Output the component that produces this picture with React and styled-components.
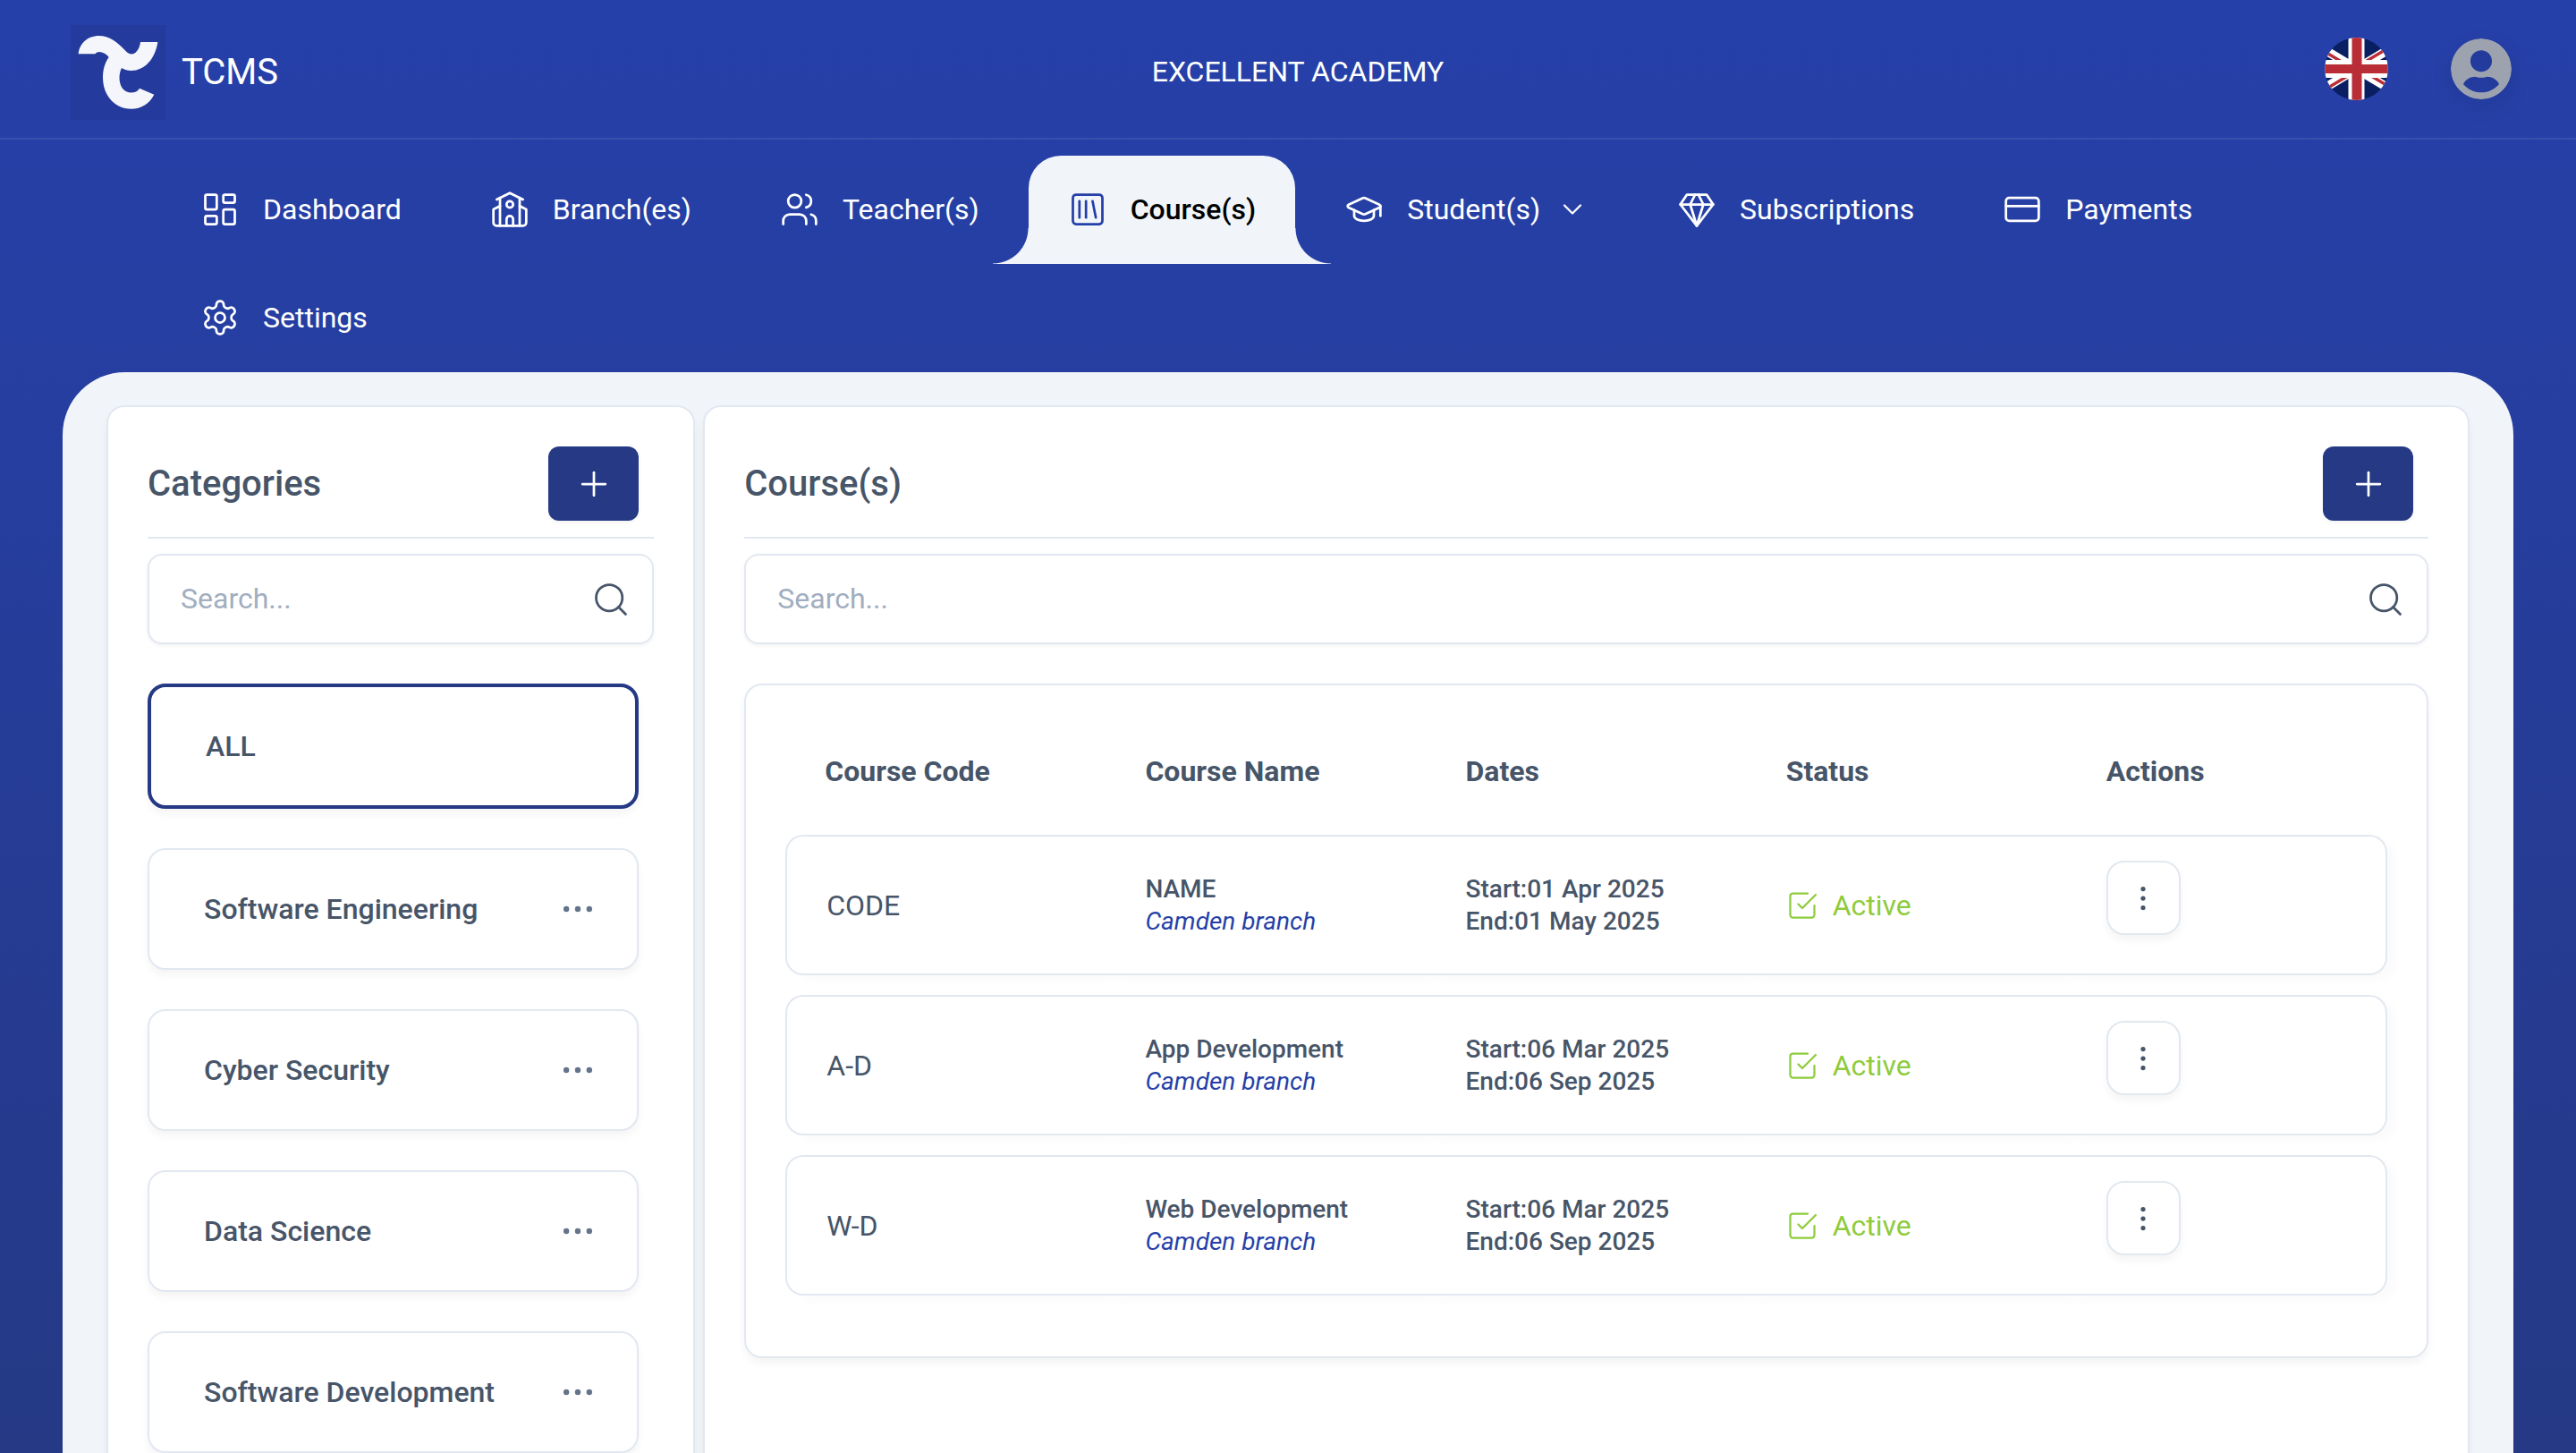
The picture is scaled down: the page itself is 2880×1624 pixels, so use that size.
import React from "react";
import styled, { createGlobalStyle, css } from "styled-components";
import {
  LayoutDashboard,
  Users,
  GraduationCap,
  ChevronDown,
  CreditCard,
  Search,
  Plus,
  SquareLibrary,
} from "lucide-react";

const color = {
  brand: "#263fa8",
  brandDark: "#253985",
  surface: "#f1f5fa",
  text: "#475569",
  muted: "#64748b",
  placeholder: "#a1aec0",
  line: "#e2e8f0",
  success: "#8fcb3b",
};

const GlobalStyle = createGlobalStyle`
  *, *::before, *::after { box-sizing: border-box; }
  body {
    margin: 0;
    font-family: Roboto, "Liberation Sans", sans-serif;
    font-size: 32px;
    line-height: 44px;
    color: ${color.text};
  }
  button, input { font: inherit; color: inherit; }
`;

const cardShadow = css`
  box-shadow: 0 6px 10px rgba(0, 0, 0, 0.043);
`;

const Page = styled.div`
  display: flex;
  flex-direction: column;
  height: 100vh;
  overflow: hidden;
  background: linear-gradient(to bottom, #2640aa, #253985);
`;

const Header = styled.header`
  display: flex;
  align-items: center;
  justify-content: space-between;
  height: 156px;
  flex-shrink: 0;
  padding: 0 72px 0 79px;
  border-bottom: 2px solid rgba(255, 255, 255, 0.08);
  color: #fff;
`;

const Brand = styled.a`
  display: flex;
  align-items: center;
  gap: 18px;
  margin-top: 8px;
  font-size: 40px;
  color: inherit;
  text-decoration: none;
`;

const LogoMark = styled.svg`
  display: block;
  width: 106px;
  height: 106px;
  background: #243a9c;
`;

const Academy = styled.div`
  margin-top: 6px;
`;

const HeaderActions = styled.div`
  display: flex;
  align-items: center;
  gap: 70px;
`;

const RoundButton = styled.button`
  display: flex;
  padding: 0 0 0 8px;
  border: 0;
  background: none;
  cursor: pointer;

  svg {
    display: block;
    border-radius: 50%;
  }
`;

const AvatarButton = styled(RoundButton)`
  padding: 0;

  svg {
    filter: drop-shadow(0 8px 10px rgba(0, 0, 0, 0.12));
  }
`;

const Nav = styled.nav`
  display: flex;
  flex-wrap: wrap;
  flex-shrink: 0;
  column-gap: 11px;
  padding: 18px 180px 0;
`;

const NavLink = styled.a`
  position: relative;
  display: flex;
  align-items: center;
  gap: 26px;
  height: 121px;
  padding: 0 44px 2px;
  border-radius: 36px 36px 0 0;
  color: #fff;
  text-decoration: none;

  ${(p) =>
    p.$active &&
    css`
      background: ${color.surface};
      color: #000;
      font-weight: 500;

      > svg {
        color: ${color.brand};
      }

      &::before,
      &::after {
        content: "";
        position: absolute;
        bottom: 0;
        width: 40px;
        height: 40px;
      }
      &::before {
        right: 100%;
        background: radial-gradient(circle at top left, transparent 39px, ${color.surface} 40px);
      }
      &::after {
        left: 100%;
        background: radial-gradient(circle at top right, transparent 39px, ${color.surface} 40px);
      }
    `}
`;

const NavLabel = styled.span`
  display: flex;
  align-items: center;
  gap: 18px;
`;

const Main = styled.main`
  flex: 1;
  min-height: 0;
  margin: 0 70px;
  padding: 37px 49px 0;
  overflow: hidden;
  border-radius: 70px 70px 0 0;
  background: ${color.surface};
`;

const Columns = styled.div`
  display: grid;
  grid-template-columns: minmax(0, 1fr) minmax(0, 3fr);
  gap: 9px;
  min-height: 100%;
`;

const Panel = styled.section`
  padding: 44px;
  border: 2px solid ${color.line};
  border-radius: 20px;
  background: #fff;
  ${cardShadow}
`;

const PanelHeader = styled.div`
  display: flex;
  align-items: center;
  justify-content: space-between;
  padding: 0 17px 18px 0;
  border-bottom: 2px solid ${color.line};
`;

const PanelTitle = styled.h2`
  margin: 0;
  font-size: 40px;
  font-weight: 500;
`;

const AddButton = styled.button`
  display: flex;
  align-items: center;
  justify-content: center;
  width: 101px;
  height: 83px;
  padding: 0;
  border: 0;
  border-radius: 12px;
  background: ${color.brandDark};
  color: #fff;
  box-shadow: 0 2px 4px rgba(0, 0, 0, 0.05);
  cursor: pointer;
`;

const SearchBox = styled.label`
  display: flex;
  align-items: center;
  height: 101px;
  margin: 17px 0 44px;
  padding: 0 24px 0 35px;
  border: 2px solid ${color.line};
  border-radius: 16px;
  background: #fff;
  box-shadow: 0 2px 4px rgba(0, 0, 0, 0.05);
`;

const SearchInput = styled.input`
  flex: 1;
  min-width: 0;
  padding: 0 0 2px;
  border: 0;
  outline: 0;
  background: none;

  &::placeholder {
    color: ${color.placeholder};
    opacity: 1;
  }
`;

const CategoryList = styled.ul`
  display: flex;
  flex-direction: column;
  gap: 44px;
  margin: 0;
  padding: 0 17px 0 0;
  list-style: none;
`;

const Category = styled.li`
  display: flex;
  align-items: center;
  justify-content: space-between;
  padding: 44px 44px 44px 61px;
  border: ${(p) => (p.$selected ? `4px solid ${color.brandDark}` : `2px solid ${color.line}`)};
  border-radius: 20px;
  background: #fff;
  font-weight: 500;
  ${cardShadow}
`;

const PlainButton = styled.button`
  display: flex;
  padding: 0;
  border: 0;
  background: none;
  font-weight: inherit;
  cursor: pointer;
`;

const MoreButton = styled(PlainButton)`
  color: ${color.muted};
`;

const TableCard = styled.div`
  padding: 0 44px 46px;
  border: 2px solid ${color.line};
  border-radius: 20px;
  ${cardShadow}
`;

const Table = styled.table`
  width: 100%;
  table-layout: fixed;
  border-collapse: separate;
  border-spacing: 0 22px;
  margin-bottom: -22px;
  text-align: left;
`;

const TableWrap = styled.div`
  display: flow-root;
  padding-bottom: 22px;
`;

const HeadCell = styled.th`
  padding: 52px 44px 27px;
  font-weight: 700;
`;

const Cell = styled.td`
  height: 157px;
  padding: 0 44px;
  border: solid ${color.line};
  border-width: 2px 0;
  background: #fff;
  vertical-align: middle;
  box-shadow: 10px 6px 10px rgba(0, 0, 0, 0.02);

  &:first-child {
    border-left-width: 2px;
    border-radius: 20px 0 0 20px;
  }
  &:last-child {
    border-right-width: 2px;
    border-radius: 0 20px 20px 0;
  }
`;

const Detail = styled.div`
  font-size: 28px;
  line-height: 36px;
  font-weight: 500;
  white-space: nowrap;
`;

const Branch = styled(Detail)`
  font-weight: 400;
  font-style: italic;
  color: ${color.brand};
`;

const Status = styled.div`
  display: flex;
  align-items: center;
  gap: 16px;
  color: ${color.success};
`;

const RowMenuButton = styled.button`
  display: flex;
  align-items: center;
  justify-content: center;
  width: 83px;
  height: 83px;
  margin-bottom: 16px;
  padding: 0;
  border: 2px solid ${color.line};
  border-radius: 20px;
  background: #fff;
  cursor: pointer;
  ${cardShadow}
`;

function Icon({ size = 44, stroke = 1.5, children }) {
  return (
    <svg
      width={size}
      height={size}
      viewBox="0 0 24 24"
      fill="none"
      stroke="currentColor"
      strokeWidth={stroke}
      strokeLinecap="round"
      strokeLinejoin="round"
      aria-hidden="true"
    >
      {children}
    </svg>
  );
}

const SchoolIcon = () => (
  <Icon>
    <path d="M14 22v-4a2 2 0 1 0-4 0v4" />
    <path d="m18 10 4 2v8a2 2 0 0 1-2 2H4a2 2 0 0 1-2-2v-8l4-2" />
    <path d="M18 5v17" />
    <path d="m4 6 8-4 8 4" />
    <path d="M6 5v17" />
    <circle cx="12" cy="9" r="2" />
  </Icon>
);

const GemIcon = () => (
  <Icon>
    <path d="M6 3h12l4 6-10 13L2 9Z" />
    <path d="M11 3 8 9l4 13 4-13-3-6" />
    <path d="M2 9h20" />
  </Icon>
);

const SettingsIcon = () => (
  <Icon>
    <path d="M12.22 2h-.44a2 2 0 0 0-2 2v.18a2 2 0 0 1-1 1.73l-.43.25a2 2 0 0 1-2 0l-.15-.08a2 2 0 0 0-2.73.73l-.22.38a2 2 0 0 0 .73 2.73l.15.1a2 2 0 0 1 1 1.72v.51a2 2 0 0 1-1 1.74l-.15.09a2 2 0 0 0-.73 2.73l.22.38a2 2 0 0 0 2.73.73l.15-.08a2 2 0 0 1 2 0l.43.25a2 2 0 0 1 1 1.73V20a2 2 0 0 0 2 2h.44a2 2 0 0 0 2-2v-.18a2 2 0 0 1 1-1.73l.43-.25a2 2 0 0 1 2 0l.15.08a2 2 0 0 0 2.73-.73l.22-.39a2 2 0 0 0-.73-2.73l-.15-.08a2 2 0 0 1-1-1.74v-.5a2 2 0 0 1 1-1.74l.15-.09a2 2 0 0 0 .73-2.73l-.22-.38a2 2 0 0 0-2.73-.73l-.15.08a2 2 0 0 1-2 0l-.43-.25a2 2 0 0 1-1-1.73V4a2 2 0 0 0-2-2z" />
    <circle cx="12" cy="12" r="3" />
  </Icon>
);

const CheckIcon = () => (
  <Icon size={36}>
    <path d="m9 11 3 3L22 4" />
    <path d="M21 12v7a2 2 0 0 1-2 2H5a2 2 0 0 1-2-2V5a2 2 0 0 1 2-2h11" />
  </Icon>
);

const DotsIcon = () => (
  <Icon>
    <circle cx="5" cy="12" r="1" fill="currentColor" />
    <circle cx="12" cy="12" r="1" fill="currentColor" />
    <circle cx="19" cy="12" r="1" fill="currentColor" />
  </Icon>
);

const VerticalDotsIcon = () => (
  <Icon size={36}>
    <circle cx="12" cy="5" r="1" fill="currentColor" />
    <circle cx="12" cy="12" r="1" fill="currentColor" />
    <circle cx="12" cy="19" r="1" fill="currentColor" />
  </Icon>
);

const Logo = () => (
  <LogoMark viewBox="9 14 318 318" aria-hidden="true">
    <path
      fill="#f4f6fb"
      d="M35 111C38 76 66 50 104 50C140 50 164 70 196 103C205 112 217 114 226 107C236 98 241 86 243 71L301 71C293 126 258 167 212 167C200 167 190 164 180 158C170 178 170 205 181 224C196 246 228 246 240 226L289 247C274 277 246 295 212 295C156 295 117 248 117 190C117 163 124 140 137 122C130 113 120 105 106 104C100 104 95 106 91 111Z"
    />
  </LogoMark>
);

const UkFlag = () => (
  <svg width="71" height="70" viewBox="0 0 70 70" aria-hidden="true">
    <path fill="#0a1f62" d="M0 0h70v70H0z" />
    <path stroke="#fff" strokeWidth="10" d="M0 14 70 56M0 56 70 14" />
    <path fill="#b92d36" d="M0 14 35 35v4L0 18zM35 35 70 14v-4L35 31zM0 56 35 35v4L0 60zM35 35 70 56v-4L35 31z" />
    <path fill="#fff" d="M26 0h18v70H26zM0 25h70v20H0z" />
    <path fill="#b92d36" d="M30 0h11v70H30zM0 30h70v10H0z" />
  </svg>
);

const Avatar = () => (
  <svg width="68" height="68" viewBox="0 8 496 496" aria-hidden="true">
    <path
      fill="#9ca3af"
      d="M248 8C111 8 0 119 0 256s111 248 248 248 248-111 248-248S385 8 248 8zm0 96c48.6 0 88 39.4 88 88s-39.4 88-88 88-88-39.4-88-88 39.4-88 88-88zm0 344c-58.7 0-111.3-26.6-146.5-68.2 18.8-35.4 55.6-59.8 98.5-59.8 2.4 0 4.8.4 7.1 1.1 13 4.2 26.6 6.9 40.9 6.9 14.3 0 28-2.7 40.9-6.9 2.3-.7 4.7-1.1 7.1-1.1 42.9 0 79.7 24.4 98.5 59.8C359.3 421.4 306.7 448 248 448z"
    />
  </svg>
);

const lucide = { size: 44, strokeWidth: 1.5, "aria-hidden": true };

const navItems = [
  { label: "Dashboard", icon: <LayoutDashboard {...lucide} /> },
  { label: "Branch(es)", icon: <SchoolIcon /> },
  { label: "Teacher(s)", icon: <Users {...lucide} /> },
  { label: "Course(s)", icon: <SquareLibrary {...lucide} />, active: true },
  { label: "Student(s)", icon: <GraduationCap {...lucide} />, menu: true },
  { label: "Subscriptions", icon: <GemIcon /> },
  { label: "Payments", icon: <CreditCard {...lucide} /> },
  { label: "Settings", icon: <SettingsIcon /> },
];

const categories = ["Software Engineering", "Cyber Security", "Data Science", "Software Development"];

const courses = [
  { code: "CODE", name: "NAME", branch: "Camden branch", start: "01 Apr 2025", end: "01 May 2025" },
  { code: "A-D", name: "App Development", branch: "Camden branch", start: "06 Mar 2025", end: "06 Sep 2025" },
  { code: "W-D", name: "Web Development", branch: "Camden branch", start: "06 Mar 2025", end: "06 Sep 2025" },
];

const columns = ["Course Code", "Course Name", "Dates", "Status", "Actions"];

function SearchField({ label }) {
  return (
    <SearchBox>
      <SearchInput type="text" placeholder="Search..." aria-label={label} />
      <Search {...lucide} />
    </SearchBox>
  );
}

function PanelTop({ title, addLabel }) {
  return (
    <PanelHeader>
      <PanelTitle>{title}</PanelTitle>
      <AddButton type="button" aria-label={addLabel}>
        <Plus {...lucide} />
      </AddButton>
    </PanelHeader>
  );
}

export default function App() {
  return (
    <Page>
      <GlobalStyle />
      <Header>
        <Brand href="#">
          <Logo />
          TCMS
        </Brand>
        <Academy>EXCELLENT ACADEMY</Academy>
        <HeaderActions>
          <RoundButton type="button" aria-label="Language">
            <UkFlag />
          </RoundButton>
          <AvatarButton type="button" aria-label="Account">
            <Avatar />
          </AvatarButton>
        </HeaderActions>
      </Header>

      <Nav>
        {navItems.map((item) => (
          <NavLink key={item.label} href="#" $active={item.active}>
            {item.icon}
            <NavLabel>
              {item.label}
              {item.menu && <ChevronDown {...lucide} size={36} />}
            </NavLabel>
          </NavLink>
        ))}
      </Nav>

      <Main>
        <Columns>
          <Panel>
            <PanelTop title="Categories" addLabel="Add category" />
            <SearchField label="Search categories" />
            <CategoryList>
              <Category $selected>
                <PlainButton type="button">ALL</PlainButton>
              </Category>
              {categories.map((name) => (
                <Category key={name}>
                  <PlainButton type="button">{name}</PlainButton>
                  <MoreButton type="button" aria-label={`${name} options`}>
                    <DotsIcon />
                  </MoreButton>
                </Category>
              ))}
            </CategoryList>
          </Panel>

          <Panel>
            <PanelTop title="Course(s)" addLabel="Add course" />
            <SearchField label="Search courses" />
            <TableCard>
              <TableWrap>
                <Table>
                  <thead>
                    <tr>
                      {columns.map((name) => (
                        <HeadCell key={name} scope="col">
                          {name}
                        </HeadCell>
                      ))}
                    </tr>
                  </thead>
                  <tbody>
                    {courses.map((course) => (
                      <tr key={course.code}>
                        <Cell>{course.code}</Cell>
                        <Cell>
                          <Detail>{course.name}</Detail>
                          <Branch>{course.branch}</Branch>
                        </Cell>
                        <Cell>
                          <Detail>Start:{course.start}</Detail>
                          <Detail>End:{course.end}</Detail>
                        </Cell>
                        <Cell>
                          <Status>
                            <CheckIcon />
                            Active
                          </Status>
                        </Cell>
                        <Cell>
                          <RowMenuButton type="button" aria-label={`${course.code} actions`}>
                            <VerticalDotsIcon />
                          </RowMenuButton>
                        </Cell>
                      </tr>
                    ))}
                  </tbody>
                </Table>
              </TableWrap>
            </TableCard>
          </Panel>
        </Columns>
      </Main>
    </Page>
  );
}
